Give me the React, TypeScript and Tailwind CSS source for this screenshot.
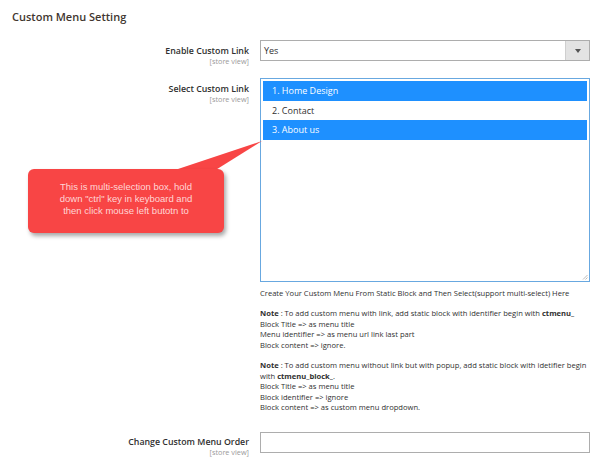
import React from 'react';

const font = { fontFamily: '"Open Sans", "Liberation Sans", sans-serif' };

function FieldLabel({ title }: { title: string }) {
  return (
    <div className="w-[249px] shrink-0 text-right">
      <div className="text-[8.8px] font-semibold text-[#303030] leading-[12px]">{title}</div>
      <div className="text-[7.3px] text-[#999] leading-[9px]">[store view]</div>
    </div>
  );
}

export default function App() {
  const options = [
    { label: '1. Home Design', selected: true },
    { label: '2. Contact', selected: false },
    { label: '3. About us', selected: true },
  ];

  return (
    <div className="relative w-[600px] h-[464px] bg-white overflow-hidden" style={font}>
      {/* Section title */}
      <div className="pl-3 pt-[9px] text-[11px] font-semibold text-[#41362f] leading-[16px]">
        Custom Menu Setting
      </div>

      {/* Enable Custom Link */}
      <div className="flex items-start mt-[15px] gap-[11px]">
        <div className="pt-[5px]">
          <FieldLabel title="Enable Custom Link" />
        </div>
        <div className="w-[330px] h-[21px] flex border border-[#adadad] bg-white">
          <div className="flex-1 text-[9px] text-[#303030] pl-[3px] leading-[19px]">Yes</div>
          <div className="w-[24px] bg-[#e3e3e3] border-l border-[#cfcfcf] flex items-center justify-center">
            <svg width="6" height="4" viewBox="0 0 6 4">
              <path d="M0 0 L6 0 L3 4 Z" fill="#555" />
            </svg>
          </div>
        </div>
      </div>

      {/* Select Custom Link */}
      <div className="flex items-start mt-[12px] gap-[11px]">
        <div className="pt-[5px]">
          <FieldLabel title="Select Custom Link" />
        </div>
        <div className="w-[330px]">
          <div className="relative h-[204px] border border-[#68a8e0] bg-white p-[2px]">
            {options.map((o) => (
              <div
                key={o.label}
                className={`h-[19.5px] text-[9px] pl-[9px] leading-[19px] ${
                  o.selected ? 'bg-[#1e90ff] text-white' : 'text-[#303030]'
                }`}
              >
                {o.label}
              </div>
            ))}
            <svg className="absolute right-[1px] bottom-[1px]" width="6" height="6" viewBox="0 0 6 6">
              <path d="M5.5 1 L1 5.5 M5.5 3.5 L3.5 5.5" stroke="#aaa" strokeWidth="0.8" />
            </svg>
          </div>

          <div className="mt-[6px] text-[7.6px] text-[#303030] leading-[10px] whitespace-nowrap">
            Create Your Custom Menu From Static Block and Then Select(support multi-select) Here
          </div>

          <div className="mt-[10px] text-[7.6px] text-[#303030] leading-[10.5px] whitespace-nowrap">
            <div>
              <span className="font-bold">Note</span> : To add custom menu with link, add static block with identifier begin with{' '}
              <span className="font-bold">ctmenu_</span>
            </div>
            <div>Block Title =&gt; as menu title</div>
            <div>Menu identifier =&gt; as menu url link last part</div>
            <div>Block content =&gt; ignore.</div>
          </div>

          <div className="mt-[10px] text-[7.6px] text-[#303030] leading-[10.5px] whitespace-nowrap">
            <div>
              <span className="font-bold">Note</span> : To add custom menu without link but with popup, add static block with idetifier begin
            </div>
            <div>
              with <span className="font-bold">ctmenu_block_</span>.
            </div>
            <div>Block Title =&gt; as menu title</div>
            <div>Block identifier =&gt; ignore</div>
            <div>Block content =&gt; as custom menu dropdown.</div>
          </div>
        </div>
      </div>

      {/* Change Custom Menu Order */}
      <div className="flex items-start mt-[19px] gap-[11px]">
        <div className="pt-[4px]">
          <FieldLabel title="Change Custom Menu Order" />
        </div>
        <div className="w-[330px] h-[21px] border border-[#adadad] bg-white" />
      </div>

      {/* Callout bubble */}
      <svg className="absolute left-0 top-0 pointer-events-none" width="600" height="464">
        <path d="M172 171 L262 141 L214 171 Z" fill="#f84545" />
      </svg>
      <div className="absolute left-[28px] top-[169px] w-[196px] h-[64px] rounded-[6px] bg-[#f84545] shadow-[2px_3px_4px_rgba(0,0,0,0.35)] flex items-center justify-center text-center">
        <div className="text-[9.5px] leading-[12px] text-[#ffd6d6] pb-[4px]" style={{ fontFamily: '"Liberation Sans", Arial, sans-serif' }}>
          This is multi-selection box, hold
          <br />
          down "ctrl" key in keyboard and
          <br />
          then click mouse left butotn to
        </div>
      </div>
    </div>
  );
}
